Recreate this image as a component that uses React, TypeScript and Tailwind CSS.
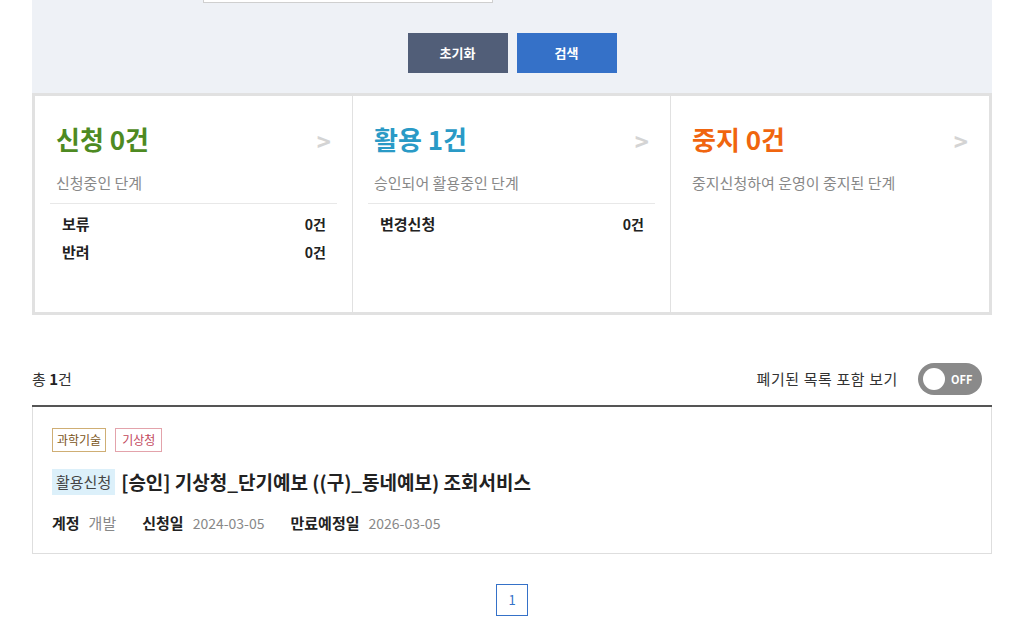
import { useState } from 'react'

type Stat = {
  label: string
  count: number
  color: string
  desc: string
  rows: { name: string; count: number }[]
}

const stats: Stat[] = [
  {
    label: '신청',
    count: 0,
    color: 'text-[#4e8a22]',
    desc: '신청중인 단계',
    rows: [
      { name: '보류', count: 0 },
      { name: '반려', count: 0 },
    ],
  },
  {
    label: '활용',
    count: 1,
    color: 'text-[#2a9ac6]',
    desc: '승인되어 활용중인 단계',
    rows: [{ name: '변경신청', count: 0 }],
  },
  {
    label: '중지',
    count: 0,
    color: 'text-[#f0650f]',
    desc: '중지신청하여 운영이 중지된 단계',
    rows: [],
  },
]

export default function App() {
  const [showAll, setShowAll] = useState(false)

  return (
    <div
      className="min-h-[622px] bg-white text-[#333]"
      style={{ fontFamily: '"Noto Sans CJK KR", "Noto Sans", sans-serif' }}
    >
      <div className="mx-[32px] w-[960px]">
        {/* 검색 영역 */}
        <div className="h-[93px] bg-[#eef1f6]">
          <div className="ml-[171px] h-[3px] w-[290px] border-x border-b border-[#cfcfcf] bg-white" />
          <div className="mt-[30px] flex justify-center gap-[9px]">
            <button className="h-[40px] w-[100px] bg-[#515e78] text-[13px] font-bold text-white">
              초기화
            </button>
            <button className="h-[40px] w-[100px] bg-[#3571c8] text-[13px] font-bold text-white">
              검색
            </button>
          </div>
        </div>

        {/* 현황 */}
        <div className="grid h-[222px] grid-cols-3 border-[3px] border-[#e1e1e1]">
          {stats.map((s, i) => (
            <div
              key={s.label}
              className={`px-[15px] pt-[23px] ${i < 2 ? 'border-r border-[#e1e1e1]' : ''}`}
            >
              <div className="flex items-center justify-between pl-[6px] pr-[6px]">
                <div className={`text-[26px] font-bold leading-[34px] ${s.color}`}>
                  {s.label} {s.count}건
                </div>
                <span className="mt-[4px] text-[24px] font-bold text-[#d4d4d4]">&gt;</span>
              </div>
              <div className="mt-[14px] pl-[6px] text-[15px] leading-[20px] text-[#888]">
                {s.desc}
              </div>
              {s.rows.length > 0 && (
                <div className="mt-[10px] border-t border-[#e8e8e8] pt-[6px]">
                  {s.rows.map((r) => (
                    <div
                      key={r.name}
                      className="flex justify-between pl-[12px] pr-[11px] text-[15px] font-bold leading-[28px] text-[#222]"
                    >
                      <span>{r.name}</span>
                      <span className="text-[14px]">{r.count}건</span>
                    </div>
                  ))}
                </div>
              )}
            </div>
          ))}
        </div>

        {/* 목록 상단 */}
        <div className="mt-[48px] flex items-center justify-between">
          <div className="text-[15px] text-[#333]">
            총 <b className="text-[#222]">1</b>건
          </div>
          <div className="flex items-center gap-[20px] pr-[10px]">
            <span className="text-[15px] tracking-[0.6px] text-[#333]">폐기된 목록 포함 보기</span>
            <button
              onClick={() => setShowAll((v) => !v)}
              className="relative flex h-[32px] w-[64px] items-center rounded-full bg-[#8a8a8a]"
            >
              <span className="absolute left-[5px] top-[5px] h-[22px] w-[22px] rounded-full bg-white" />
              <span className="ml-[33px] text-[11px] font-bold text-white">
                {showAll ? 'ON' : 'OFF'}
              </span>
            </button>
          </div>
        </div>

        {/* 목록 */}
        <div className="mt-[10px] border-t-2 border-[#555]">
          <div className="border-x border-b border-[#dedede] px-[19px] pb-[20px] pt-[21px]">
            <div className="flex gap-[9px]">
              <span className="border border-[#cfae74] px-[4px] text-[12px] leading-[22px] text-[#7a5418]">
                과학기술
              </span>
              <span className="border border-[#e3a3ab] px-[6px] text-[12px] leading-[22px] text-[#c2485d]">
                기상청
              </span>
            </div>
            <div className="mt-[16px] flex items-center gap-[6px]">
              <span className="bg-[#dcf0fa] px-[4px] text-[15px] leading-[26px] text-[#444]">
                활용신청
              </span>
              <span className="text-[19px] font-bold text-[#222]">
                [승인] 기상청_단기예보 ((구)_동네예보) 조회서비스
              </span>
            </div>
            <div className="mt-[16px] flex items-center text-[14px] leading-[20px]">
              <span className="text-[15px] font-bold text-[#222]">계정</span>
              <span className="ml-[9px] text-[15px] text-[#888]">개발</span>
              <span className="ml-[26px] text-[15px] font-bold text-[#222]">신청일</span>
              <span className="ml-[9px] text-[#888]">2024-03-05</span>
              <span className="ml-[26px] text-[15px] font-bold text-[#222]">만료예정일</span>
              <span className="ml-[9px] text-[#888]">2026-03-05</span>
            </div>
          </div>
        </div>

        {/* 페이지 */}
        <div className="mt-[30px] flex justify-center">
          <button className="h-[32px] w-[32px] border border-[#3571c8] text-[13px] text-[#3571c8]">
            1
          </button>
        </div>
      </div>
    </div>
  )
}
